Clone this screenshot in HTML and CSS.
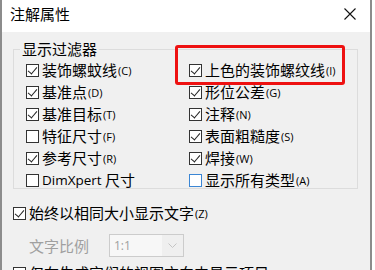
FILE: index.html
```html
<!DOCTYPE html>
<html lang="zh-CN">
<head>
  <meta charset="UTF-8">
  <meta name="viewport" content="width=device-width, initial-scale=1.0">
  <title>注解属性</title>
  <link rel="stylesheet" href="styles.css">
</head>
<body>

  <div class="dialog">
    <!-- Title bar -->
    <div class="titlebar">
      <span class="title">注解属性</span>
      <svg class="close" width="12" height="12" viewBox="0 0 12 12">
        <path d="M0.5 0.5 L11.5 11.5 M11.5 0.5 L0.5 11.5" stroke="#111" stroke-width="1.1" fill="none"/>
      </svg>
    </div>

    <div class="content">
      <!-- Display filter -->
      <fieldset class="filter">
        <legend>显示过滤器</legend>
        <div class="grid">
          <label class="check"><span class="box on"></span>装饰螺蚊线<span class="key">(C)</span></label>
          <label class="check"><span class="box on"></span>上色的装饰螺纹线<span class="key">(I)</span></label>
          <label class="check"><span class="box on"></span>基准点<span class="key">(D)</span></label>
          <label class="check"><span class="box on"></span>形位公差<span class="key">(G)</span></label>
          <label class="check"><span class="box on"></span>基准目标<span class="key">(T)</span></label>
          <label class="check"><span class="box on"></span>注释<span class="key">(N)</span></label>
          <label class="check"><span class="box"></span>特征尺寸<span class="key">(F)</span></label>
          <label class="check"><span class="box on"></span>表面粗糙度<span class="key">(S)</span></label>
          <label class="check"><span class="box on"></span>参考尺寸<span class="key">(R)</span></label>
          <label class="check"><span class="box on"></span>焊接<span class="key">(W)</span></label>
          <label class="check"><span class="box"></span><span class="latin">DimXpert</span>&nbsp;尺寸</label>
          <label class="check"><span class="box focus"></span>显示所有类型<span class="key">(A)</span></label>
        </div>
      </fieldset>

      <label class="check option"><span class="box on"></span>始终以相同大小显示文字<span class="key">(Z)</span></label>

      <div class="scale-row">
        <span class="scale-label">文字比例</span>
        <div class="combo">
          <span class="combo-value">1:1</span>
          <svg class="chevron" width="9" height="5" viewBox="0 0 9 5">
            <path d="M0.5 0.5 L4.5 4.5 L8.5 0.5" stroke="#c4c4c4" stroke-width="1" fill="none"/>
          </svg>
        </div>
      </div>

      <label class="check option"><span class="box on"></span>仅在生成它们的视图方向中显示项目<span class="key">(O)</span></label>
    </div>

    <!-- Red highlight drawn over the dialog -->
    <div class="highlight"></div>
  </div>

</body>
</html>
```

FILE: styles.css
```css
body {
  margin: 0;
  padding: 0;
  background-color: #fff;
  font-family: "Noto Sans CJK SC", "Noto Sans", sans-serif;
  color: #000;
  overflow: hidden;
}

.dialog {
  position: relative;
  width: 368px;
  height: 290px;
  background-color: #f0f0f0;
  border-left: 2px solid #8c8c8c;
  border-right: 2px solid #8c8c8c;
}

.titlebar {
  display: flex;
  align-items: center;
  justify-content: space-between;
  height: 32px;
  padding: 0 14px 4px 8px;
  background-color: #fff;
  box-sizing: border-box;
}

.title {
  font-size: 15px;
  line-height: 20px;
}

.close {
  display: block;
}

.content {
  padding: 7px 0 0 10px;
}

.filter {
  width: 345px;
  height: 150px;
  margin: 0 0 0 1px;
  padding: 0;
  box-sizing: border-box;
  border: 1px solid #dcdcdc;
}

.filter legend {
  margin-left: 6px;
  padding: 0 2px 0 2px;
  font-size: 15px;
  line-height: 20px;
}

.grid {
  display: grid;
  grid-template-columns: 163px 160px;
  grid-auto-rows: 22px;
  padding: 0 0 0 12px;
  margin-top: 0;
}

.check {
  display: flex;
  align-items: center;
  font-size: 15px;
  line-height: 22px;
  white-space: nowrap;
}

.box {
  flex: none;
  width: 13px;
  height: 13px;
  margin-right: 3px;
  border: 1px solid #333;
  box-sizing: border-box;
  background-color: #fff;
  position: relative;
}

.box.on::after {
  content: "";
  position: absolute;
  left: 3px;
  top: 0px;
  width: 4px;
  height: 8px;
  border-right: 1px solid #222;
  border-bottom: 1px solid #222;
  transform: rotate(40deg);
}

.box.focus {
  border-color: #3b86d4;
}

.key {
  font-family: "Open Sans", "Noto Sans", sans-serif;
  font-size: 11px;
  margin-left: 1px;
  padding-top: 2px;
}

.latin {
  font-family: "Open Sans", "Noto Sans", sans-serif;
  font-size: 13.5px;
}

.option {
  margin-top: 12px;
  padding-left: 1px;
}

.scale-row {
  display: flex;
  align-items: center;
  margin-top: 9px;
  padding-left: 17px;
}

.scale-label {
  width: 80px;
  color: #a0a0a0;
  font-size: 15px;
  line-height: 20px;
}

.combo {
  display: flex;
  align-items: center;
  justify-content: space-between;
  width: 75px;
  height: 23px;
  padding: 0 6px 0 4px;
  box-sizing: border-box;
  border: 1px solid #cccccc;
  background: linear-gradient(to right, #f7f7f7 52px, #efefef 52px);
}

.combo-value {
  font-family: "Open Sans", "Noto Sans", sans-serif;
  font-size: 12px;
  color: #a0a0a0;
}

.scale-row + .option {
  margin-top: 4px;
}

.highlight {
  position: absolute;
  left: 173px;
  top: 45px;
  width: 170px;
  height: 40px;
  border: 3px solid #ee1111;
  border-radius: 3px;
  box-sizing: border-box;
}
```
